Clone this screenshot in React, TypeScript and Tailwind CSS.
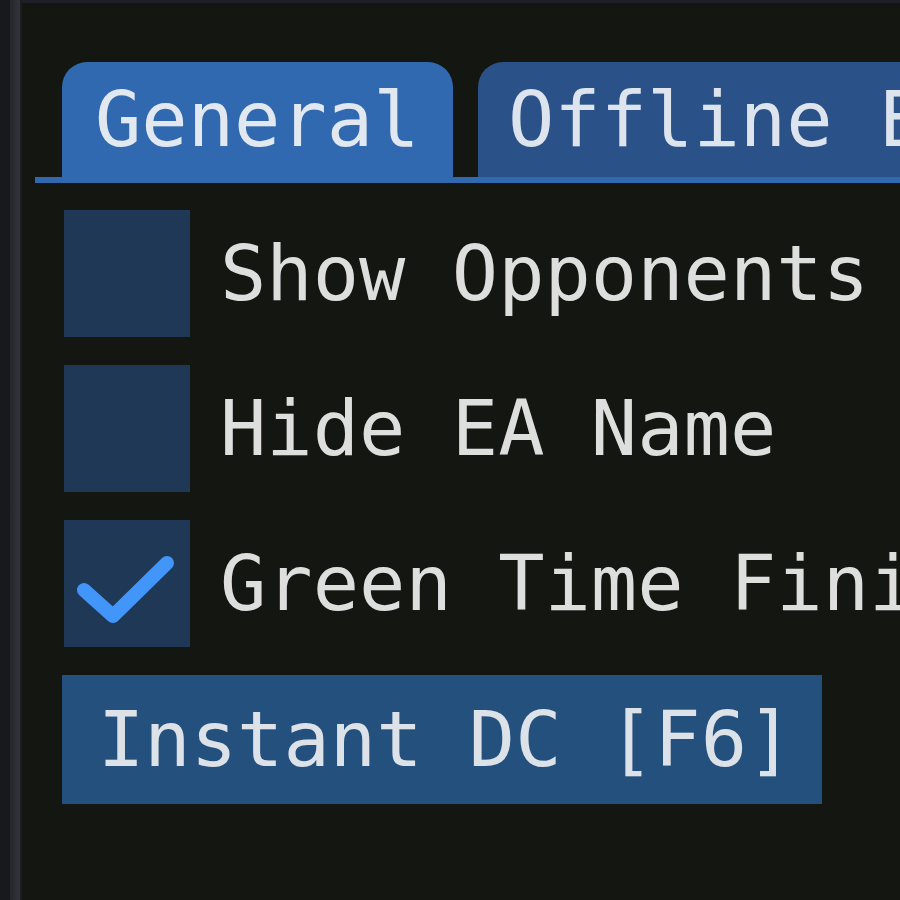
const font = { fontFamily: '"DejaVu Sans Mono", "Liberation Mono", monospace' };

function Checkbox({ label, checked }: { label: string; checked?: boolean }) {
  return (
    <div className="flex items-center gap-[30px] ml-[2px]">
      <div className="w-[126px] h-[127px] shrink-0 bg-[#1f3855] flex items-center justify-center">
        {checked && (
          <svg width="126" height="127" viewBox="0 0 126 127">
            <polyline
              points="20,70 49,96 103,43"
              fill="none"
              stroke="#4296fa"
              strokeWidth="14"
              strokeLinecap="round"
              strokeLinejoin="round"
            />
          </svg>
        )}
      </div>
      <span className="text-[77px] leading-none text-[#dedede] whitespace-nowrap" style={font}>
        {label}
      </span>
    </div>
  );
}

export default function App() {
  return (
    <div className="w-[900px] h-[900px] bg-[#131611] flex overflow-hidden">
      {/* window edge */}
      <div className="w-[22px] h-full shrink-0 flex">
        <div className="w-[10px] bg-[#18191d]" />
        <div className="w-[10px] bg-gradient-to-r from-[#25262b] to-[#34353b]" />
        <div className="w-[2px] bg-[#1b1c1f]" />
      </div>

      <div className="flex-1 flex flex-col min-w-0">
        <div className="h-[3px] bg-[#1d2026] shrink-0" />

        {/* tab bar */}
        <div className="mt-[59px] ml-[13px] flex flex-col">
          <div className="flex gap-[25px] pl-[27px] h-[115px] overflow-hidden">
            <div className="w-[391px] shrink-0 bg-[#3069b0] rounded-t-[25px] flex items-center pl-[33px]">
              <span className="text-[77px] leading-none text-[#e2e8f0] whitespace-nowrap" style={font}>
                General
              </span>
            </div>
            <div className="w-[600px] shrink-0 bg-[#2a5288] rounded-t-[25px] flex items-center pl-[30px]">
              <span className="text-[77px] leading-none text-[#dde4ee] whitespace-nowrap" style={font}>
                Offline ESP
              </span>
            </div>
          </div>
          <div className="h-[6px] bg-[#3069b0]" />
        </div>

        {/* options */}
        <div className="mt-[27px] pl-[40px] flex flex-col gap-[28px]">
          <Checkbox label="Show Opponents" />
          <Checkbox label="Hide EA Name" />
          <Checkbox label="Green Time Finish" checked />
          <button className="w-[760px] h-[129px] bg-[#24507e] flex items-center pl-[36px] text-left">
            <span className="text-[77px] leading-none text-[#dde2e8] whitespace-nowrap" style={font}>
              Instant DC [F6]
            </span>
          </button>
        </div>
      </div>
    </div>
  );
}
